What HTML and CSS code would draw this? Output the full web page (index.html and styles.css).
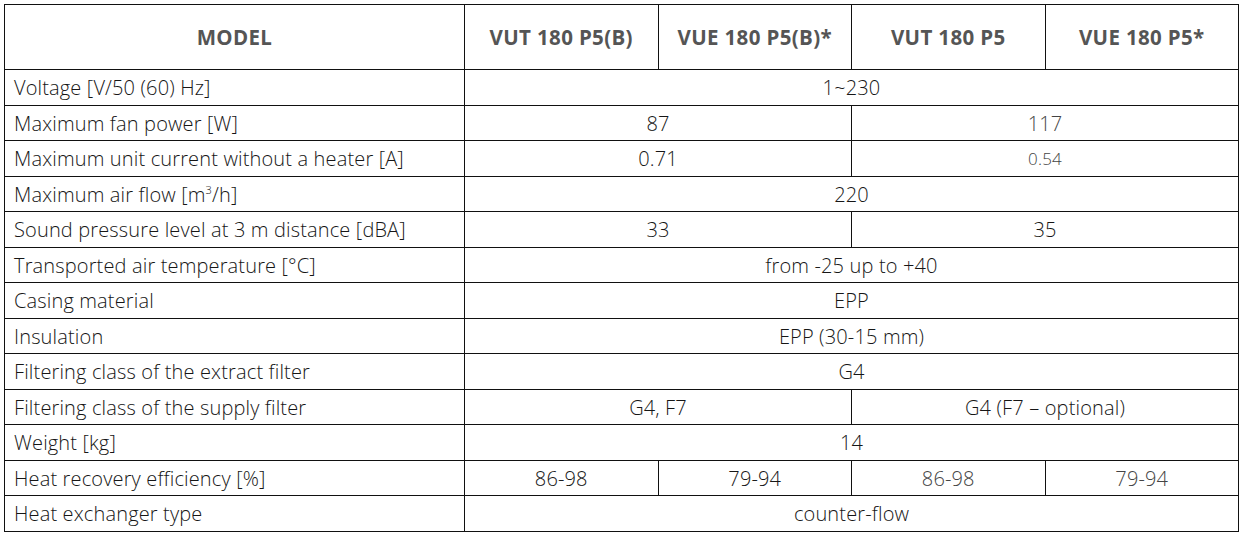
FILE: index.html
```html
<!DOCTYPE html>
<html>
<head>
<meta charset="utf-8">
<link rel="stylesheet" href="styles.css">
</head>
<body>
<table class="spec">
  <colgroup>
    <col class="c-label">
    <col class="c-val">
    <col class="c-val">
    <col class="c-val">
    <col class="c-val">
  </colgroup>
  <thead>
    <tr class="head">
      <th>MODEL</th>
      <th>VUT 180 P5(B)</th>
      <th>VUE 180 P5(B)*</th>
      <th>VUT 180 P5</th>
      <th>VUE 180 P5*</th>
    </tr>
  </thead>
  <tbody>
    <tr><td class="lbl">Voltage [V/50 (60) Hz]</td><td colspan="4">1~230</td></tr>
    <tr><td class="lbl">Maximum fan power [W]</td><td colspan="2">87</td><td colspan="2" class="soft">117</td></tr>
    <tr><td class="lbl">Maximum unit current without a heater [A]</td><td colspan="2">0.71</td><td colspan="2" class="soft small">0.54</td></tr>
    <tr><td class="lbl">Maximum air flow [m<sup>3</sup>/h]</td><td colspan="4">220</td></tr>
    <tr><td class="lbl">Sound pressure level at 3 m distance [dBA]</td><td colspan="2">33</td><td colspan="2">35</td></tr>
    <tr><td class="lbl">Transported air temperature [°C]</td><td colspan="4">from -25 up to +40</td></tr>
    <tr><td class="lbl">Casing material</td><td colspan="4">EPP</td></tr>
    <tr><td class="lbl">Insulation</td><td colspan="4">EPP (30-15 mm)</td></tr>
    <tr><td class="lbl">Filtering class of the extract filter</td><td colspan="4">G4</td></tr>
    <tr><td class="lbl">Filtering class of the supply filter</td><td colspan="2">G4, F7</td><td colspan="2">G4 (F7 – optional)</td></tr>
    <tr><td class="lbl">Weight [kg]</td><td colspan="4">14</td></tr>
    <tr><td class="lbl">Heat recovery efficiency [%]</td><td>86-98</td><td>79-94</td><td class="soft">86-98</td><td class="soft">79-94</td></tr>
    <tr><td class="lbl">Heat exchanger type</td><td colspan="4">counter-flow</td></tr>
  </tbody>
</table>
</body>
</html>
```

FILE: styles.css
```css
html, body {
  margin: 0;
  padding: 0;
  background: #ffffff;
}

body {
  padding: 4px 0 0 4px;
}

.spec {
  border-collapse: collapse;
  table-layout: fixed;
  width: 1234px;
  font-family: "Open Sans", "Noto Sans", sans-serif;
  color: #161616;
}

.c-label {
  width: 460px;
}

.c-val {
  width: 193.5px;
}

.spec th,
.spec td {
  border: 1px solid #111111;
  padding: 0;
  text-align: center;
  vertical-align: middle;
  white-space: nowrap;
}

.head {
  height: 65px;
}

.spec th {
  font-weight: 700;
  font-size: 20.5px;
  color: #555555;
  letter-spacing: 0.35px;
}

.spec tbody tr {
  height: 35.5px;
}

.spec td {
  font-size: 20px;
  font-weight: 300;
  line-height: 24px;
  letter-spacing: 0.15px;
  padding-top: 2px;
}

.spec td.lbl {
  text-align: left;
  padding-left: 9px;
}

.spec td.soft {
  color: #444444;
}

.spec td.small {
  font-size: 17px;
}

.spec sup {
  font-size: 11px;
  line-height: 0;
  vertical-align: 8px;
}
```
